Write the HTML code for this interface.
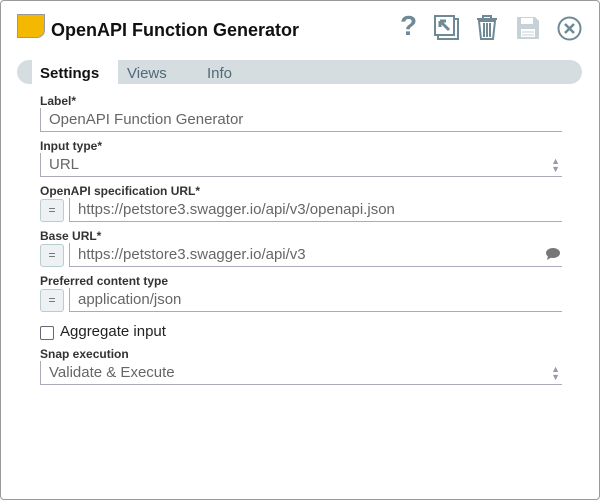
<!DOCTYPE html><html><head><style>
body{margin:0;width:600px;height:500px;font-family:"Liberation Sans",sans-serif;background:#fff;overflow:hidden}
.panel{position:absolute;left:0;top:0;width:598px;height:498px;border:1px solid #999;border-radius:4px}
.abs{position:absolute}
.lbl{position:absolute;left:40px;font-size:12px;font-weight:bold;color:#333}
.inp{position:absolute;border-left:1px solid #aab;border-bottom:1px solid #aab;font-size:15px;color:#666;padding-left:8px;box-sizing:border-box;height:24px;line-height:24px;right:38px}
.eq{position:absolute;left:40px;width:24px;height:23px;border:1px solid #bcc;border-radius:3px;background:#eef1f3;box-sizing:border-box;text-align:center;font-size:12px;color:#666;line-height:20px}
.arr{position:absolute;right:40px;font-size:9px;color:#99a;line-height:8px}
</style></head><body>
<div class="panel"></div>
<div class="abs" style="left:17px;top:14px;width:26px;height:22px;background:#f5b800;border:1px solid #999;border-radius:0 0 8px 0"></div>
<div class="abs" style="left:51px;top:20px;font-size:18px;font-weight:bold;color:#111">OpenAPI Function Generator</div>
<div class="abs" style="left:400px;top:10px;font-size:28px;font-weight:bold;color:#6f8a96">?</div>
<svg class="abs" style="left:434px;top:15px" width="26" height="26"><rect x="4" y="4" width="20" height="20" fill="none" stroke="#6f8a96" stroke-width="2"/><rect x="1" y="1" width="19" height="19" fill="#fff" stroke="#6f8a96" stroke-width="2"/><path d="M6 6 L15 15 M6 6 H12 M6 6 V12" stroke="#6f8a96" stroke-width="3"/></svg>
<svg class="abs" style="left:476px;top:15px" width="22" height="26"><path d="M1 4 H21 M7 4 V1 H15 V4 M3 6 L5 24 H17 L19 6 Z M8 8 V22 M11 8 V22 M14 8 V22" stroke="#6f8a96" stroke-width="2" fill="none"/></svg>
<svg class="abs" style="left:516px;top:16px" width="24" height="24"><path d="M1 1 H19 L23 5 V23 H1 Z" fill="#c7d2d8"/><rect x="5" y="2" width="12" height="6" fill="#fff"/><rect x="5" y="13" width="14" height="8" fill="#fff"/><path d="M6 16 H18 M6 19 H18" stroke="#c7d2d8"/></svg>
<svg class="abs" style="left:557px;top:16px" width="25" height="25"><circle cx="12.5" cy="12.5" r="11" fill="none" stroke="#6f8a96" stroke-width="2"/><path d="M8 8 L17 17 M17 8 L8 17" stroke="#6f8a96" stroke-width="2.5"/></svg>
<div class="abs" style="left:17px;top:60px;width:565px;height:24px;background:#d5dde0;border-radius:12px"></div>
<div class="abs" style="left:32px;top:60px;width:86px;height:24px;background:#fff"></div>
<div class="abs" style="left:40px;top:65px;font-size:15px;font-weight:bold;color:#111">Settings</div>
<div class="abs" style="left:127px;top:65px;font-size:15px;color:#4f6a78">Views</div>
<div class="abs" style="left:207px;top:65px;font-size:15px;color:#4f6a78">Info</div>
<div class="lbl" style="top:94px">Label*</div>
<div class="inp" style="left:40px;top:108px">OpenAPI Function Generator</div>
<div class="lbl" style="top:139px">Input type*</div>
<div class="inp" style="left:40px;top:153px">URL</div>
<div class="arr" style="top:157px">▲<br>▼</div>
<div class="lbl" style="top:184px">OpenAPI specification URL*</div>
<div class="eq" style="top:199px">=</div>
<div class="inp" style="left:69px;top:198px">https://petstore3.swagger.io/api/v3/openapi.json</div>
<div class="lbl" style="top:229px">Base URL*</div>
<div class="eq" style="top:244px">=</div>
<div class="inp" style="left:69px;top:243px">https://petstore3.swagger.io/api/v3</div>
<svg class="abs" style="left:545px;top:247px" width="16" height="13"><ellipse cx="8" cy="6" rx="7" ry="5" fill="#777"/><path d="M3 9 L2 13 L7 10Z" fill="#777"/></svg>
<div class="lbl" style="top:274px">Preferred content type</div>
<div class="eq" style="top:289px">=</div>
<div class="inp" style="left:69px;top:288px">application/json</div>
<div class="abs" style="left:40px;top:326px;width:12px;height:12px;border:1px solid #667;border-radius:2px"></div>
<div class="abs" style="left:60px;top:323px;font-size:15px;color:#222">Aggregate input</div>
<div class="lbl" style="top:347px">Snap execution</div>
<div class="inp" style="left:40px;top:361px">Validate &amp; Execute</div>
<div class="arr" style="top:365px">▲<br>▼</div>
</body></html>
